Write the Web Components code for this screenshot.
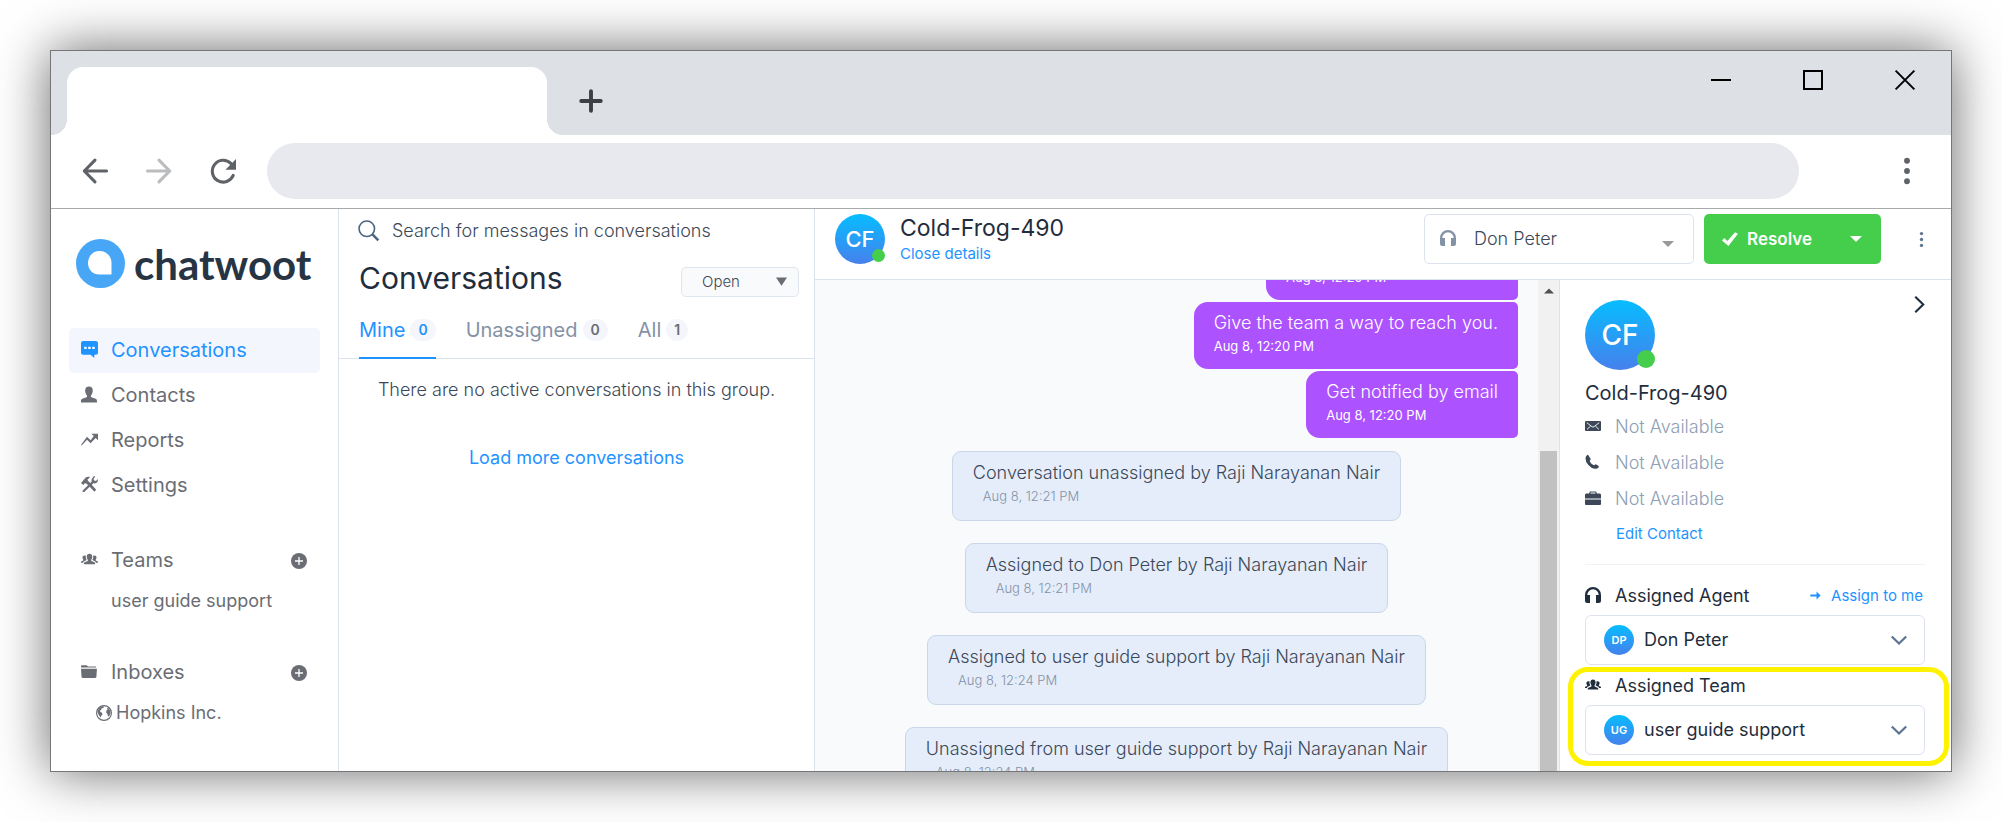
<!DOCTYPE html>
<html lang="en">
<head>
<meta charset="utf-8">
<title>Chatwoot</title>
<style>
  body { margin: 0; background: #fff; font-family: Inter, "Liberation Sans", sans-serif; color: #1f2d3d; }
</style>
</head>
<body>
<browser-window>
  <chat-dashboard></chat-dashboard>
</browser-window>

<script>
const RESET = `
  *, *::before, *::after { box-sizing: border-box; }
  button, select, input { font: inherit; color: inherit; background: none; border: 0; padding: 0; margin: 0; cursor: pointer; }
  select { appearance: none; outline: 0; min-width: 0; }
  a { color: inherit; text-decoration: none; }
  h1, h2, h3, p, ul { margin: 0; padding: 0; list-style: none; font-weight: 400; }
`;

/* Registers an element whose shadow root is cloned from a template. */
function define(tag, css, html, ready) {
  const template = document.createElement('template');
  template.innerHTML = `<style>${RESET}${css}</style>${html}`;
  customElements.define(tag, class extends HTMLElement {
    connectedCallback() {
      if (this.shadowRoot) return;
      const root = this.attachShadow({ mode: 'open' });
      root.append(template.content.cloneNode(true));
      if (ready) ready(this, root);
    }
  });
}

/* ---------- Icons ---------- */
const PEOPLE = '<path d="M8 2.500c1.700 0 2.600 1.200 2.600 2.900 0 1.100-.4 2.100-1 2.800v1.300l3 1.200c.5.2.7.7.7 1.300v.5H2.700V12c0-.6.2-1.100.7-1.300l3-1.200V8.200c-.6-.7-1-1.700-1-2.800 0-1.700.9-2.900 2.600-2.900z"/><path d="M3.400 4.200c.5 0 .9.1 1.200.3-.3 1.500 0 2.900.8 4L2.600 9.800 1.900 11H0v-.6c0-.4.3-.7.6-.8l1.500-.7v-.8c-.5-.5-.7-1.200-.7-1.900 0-1.200.7-2 2-2zM12.600 4.200c-.5 0-.9.1-1.200.3.3 1.500 0 2.900-.8 4l2.800 1.300.7 1.200H16v-.6c0-.4-.3-.7-.6-.8l-1.500-.7v-.8c.5-.5.7-1.200.7-1.900 0-1.200-.7-2-2-2z"/>';
const HEADPHONES = '<path d="M8 0a8 8 0 0 0-8 8v5.500A2.500 2.500 0 0 0 2.500 16H5V8H2.300A5.700 5.700 0 0 1 8 2.200 5.700 5.700 0 0 1 13.700 8H11v8h2.500a2.500 2.500 0 0 0 2.500-2.500V8a8 8 0 0 0-8-8z"/>';
const ICONS = {
  chat: '<path d="M2 0h12a2 2 0 0 1 2 2v9a2 2 0 0 1-2 2h-1.500v3L9 13H2a2 2 0 0 1-2-2V2a2 2 0 0 1 2-2z"/><path fill="#fff" d="M3 5.500h2.300v2H3zM6.800 5.500h2.300v2H6.800zM10.600 5.500h2.300v2h-2.300z"/>',
  person: '<path d="M7.500.5c2.300 0 3.600 1.500 3.600 3.800 0 1.700-.6 3.300-1.500 4.300-.4.5-.4 1.800.2 2.100l3.900 1.400c.8.300 1.300.9 1.300 1.800v1.600H0v-1.600c0-.9.5-1.500 1.300-1.800l3.900-1.400c.6-.3.6-1.600.2-2.100-.9-1-1.500-2.600-1.500-4.300C3.900 2 5.200.5 7.500.5z"/>',
  trend: '<path d="M9.800 2.500H16v6.200l-2.200-2.200L9 11.600 5.700 8.300.9 13.500 0 13.200l5.600-7.700 3.500 3.300 2.900-4.100z"/>',
  tools: '<path d="M1 5.300 4.700 1.200C6 .4 7.400.5 8.600 1L6 3.600l1.200 1.500 1.500 1.600 5.600 6.300-1.700 1.800-6-6.300-1.700-1.500-1.400-.2-1.300 1.600L0 6.600z"/><path d="M12.200 0 10.600 2c-.8 1-.9 2-.5 3.100L1.600 13.600c-.6.9.5 2 1.500 1.400l8.500-8.100c1.600.4 3.300-.2 4.100-1.700l.3-2.300-2 1.800-1.900-.6-.3-1.600 1.600-1.900z"/>',
  people: PEOPLE,
  folder: '<path d="M1.200 2h4.200l1.200 1.300h6.700c.7 0 1.100.4 1.100 1H0V3.100C0 2.400.5 2 1.200 2zM0 5.400h15l-.5 7.600c0 .6-.5 1-1.100 1H1.600c-.6 0-1.100-.4-1.100-1z"/>',
  globe: '<path fill-rule="evenodd" d="M8 0a8 8 0 1 1 0 16A8 8 0 0 1 8 0zm0 1.200a6.800 6.800 0 1 0 0 13.600A6.800 6.800 0 0 0 8 1.200z"/><path d="m3 3.200 3-2 2.600.4L7 3l-1.500.5-.3 1.500-1.300.6.200 1L6.200 8l.2 1.600-1.200 1.500-.6 1.500-1.500-2.100L1.800 8l.1-2.500zM11 3.400l1.100-.7 2.100 2.700.3 2.800-1.200 2.700-1.200.5-.7-2.500-1.200-1.300.2-2 1.200-.7z"/>',
  add: '<circle cx="8" cy="8" r="8"/><path stroke="#fff" stroke-width="1.300" d="M8 4v8M4 8h8"/>',
  search: '<g fill="none" stroke="currentColor"><circle cx="6.700" cy="6.700" r="5.900" stroke-width="1.200"/><path stroke-width="1.900" d="m11 11 4.500 4.500"/></g>',
  headphones: HEADPHONES,
  check: '<path d="M0 9.600 2.200 7l3.200 3L13 1.300l3 1.500L6.400 15z"/>',
  dots: '<circle cx="8" cy="1.700" r="1.800"/><circle cx="8" cy="8" r="1.800"/><circle cx="8" cy="14.300" r="1.800"/>',
  caret: '<path d="M0 4h16l-8 8z"/>',
  triangle: '<path d="M0 2h16L8 14z"/>',
  mail: '<path d="M1 3h14a1 1 0 0 1 1 1v8a1 1 0 0 1-1 1H1a1 1 0 0 1-1-1V4a1 1 0 0 1 1-1z"/><path fill="none" stroke="#fff" stroke-width=".9" d="m1.800 4.700 5.200 4q1 .7 2 0l5.200-4M2 11.400l3.600-3.300M14 11.400l-3.600-3.300"/>',
  phone: '<path d="M3.400 1.200 5.600 4.700q.4.900-.9 1.900.2 1.700 1.800 3.200 1.500 1.400 3 1.500.9-1.300 1.800-.9l2.300 1.500q.6.500.1 1.300-1.500 2-3.900 1.600-3.500-.5-6.400-3.900Q.3 7.400.5 4.200q.2-1.900 1.600-3.200.8-.4 1.300.2z"/>',
  briefcase: '<path d="M5 1.500h6l1 2h3l1 1v4H0v-4l1-1h3zm.7 1-.4 1h5.400l-.4-1zM0 9.500h16V14a1 1 0 0 1-1 1H1a1 1 0 0 1-1-1z"/>',
  arrow: '<path d="M9.500 2.300 15.500 8l-6 5.700V9.300H.5V6.700h9z"/>',
  down: '<path fill="none" stroke="currentColor" stroke-width="2.300" d="m.8 4.500 7.200 7 7.200-7"/>',
  next: '<path fill="none" stroke="currentColor" stroke-width="2" d="m4 .8 7.500 7.200L4 15.200"/>',
  back: '<path fill="none" stroke="currentColor" stroke-width="1.900" stroke-linecap="round" stroke-linejoin="round" d="M8 1.300 1.400 8 8 14.700M1.400 8h13.700"/>',
  forward: '<path fill="none" stroke="currentColor" stroke-width="1.900" stroke-linecap="round" stroke-linejoin="round" d="M8 1.300 14.600 8 8 14.700M14.600 8H.9"/>',
  reload: '<path fill="none" stroke="currentColor" stroke-width="1.900" stroke-linecap="round" d="M14.300 10.700a6.700 6.700 0 1 1-1.500-7.400"/><path d="M16 .6v6.700H9.500z"/>',
  plus: '<path fill="none" stroke="currentColor" stroke-width="2.600" stroke-linecap="round" d="M8 1.500v13M1.500 8h13"/>',
  minimize: '<path d="M0 7.200h16v1.600H0z"/>',
  maximize: '<path fill="none" stroke="currentColor" stroke-width="1.600" d="M.8.8h14.400v14.400H.8z"/>',
  close: '<path fill="none" stroke="currentColor" stroke-width="1.600" d="m.5.5 15 15m0-15-15 15"/>'
};
define('ui-icon', `
  :host { display: block; flex: none; width: var(--icon-size, 16px); height: var(--icon-size, 16px); }
  svg { display: block; width: 100%; height: 100%; fill: currentColor; overflow: visible; }
`, `<svg viewBox="0 0 16 16" aria-hidden="true"></svg>`, (host, root) => {
  root.querySelector('svg').innerHTML = ICONS[host.getAttribute('name')] || '';
});

/* ---------- Avatar ---------- */
define('user-avatar', `
  :host { display: grid; place-items: center; position: relative; flex: none; width: var(--size); height: var(--size);
    border-radius: 50%; background: linear-gradient(#06bdff, #4680ec); color: #fff; font-weight: 500; }
  i { display: none; position: absolute; right: 0; bottom: 2px; width: 26%; height: 26%; border-radius: 50%; background: #44ce4b; }
  :host([online]) i { display: block; }
`, `<span><slot></slot></span><i></i>`);

/* ---------- Browser frame ---------- */
define('browser-window', `
  :host { display: flex; height: 100vh; min-height: 500px; padding: 50px; box-sizing: border-box; overflow: hidden; }
  .frame { flex: 1; min-width: 0; display: flex; flex-direction: column; border: 1px solid #757678; background: #fff;
    box-shadow: 0 0 50px rgba(0, 0, 0, .6); }
  .tabs { flex: none; display: flex; align-items: flex-end; height: 84px; padding-left: 16px; background: #dde0e5; }
  .tab { position: relative; width: 480px; height: 68px; background: #fff; border-radius: 16px 16px 0 0; }
  .tab::before, .tab::after { content: ""; position: absolute; bottom: 0; width: 16px; height: 16px; }
  .tab::before { right: 100%; background: radial-gradient(circle at 0 0, transparent 16px, #fff 16px); }
  .tab::after { left: 100%; background: radial-gradient(circle at 100% 0, transparent 16px, #fff 16px); }
  .plus { align-self: center; margin: 16px 0 0 32px; color: #3c4043; --icon-size: 24px; }
  .controls { display: flex; gap: 72px; margin: 0 36px 0 auto; align-self: flex-start; padding-top: 19px; color: #000; --icon-size: 20px; }
  .bar { flex: none; display: flex; align-items: center; height: 74px; padding: 0 31px 2px; border-bottom: 1px solid #a9aaac;
    color: #5f6368; --icon-size: 26px; }
  .bar .next { margin: 0 38px; }
  .bar .off { color: #babcbe; }
  .address { flex: 1; min-width: 0; height: 56px; margin: 0 95px 0 31px; padding: 0 28px; border-radius: 28px; background: #e8e9ee; cursor: text; }
  .page { flex: 1; min-height: 0; display: flex; }
  ::slotted(*) { flex: 1; min-width: 0; }
`, `
  <div class="frame">
    <div class="tabs">
      <div class="tab"></div>
      <button class="plus" aria-label="New tab"><ui-icon name="plus"></ui-icon></button>
      <div class="controls">
        <button aria-label="Minimize"><ui-icon name="minimize"></ui-icon></button>
        <button aria-label="Maximize"><ui-icon name="maximize"></ui-icon></button>
        <button aria-label="Close"><ui-icon name="close"></ui-icon></button>
      </div>
    </div>
    <div class="bar">
      <button aria-label="Back"><ui-icon name="back"></ui-icon></button>
      <button class="next off" aria-label="Forward"><ui-icon name="forward"></ui-icon></button>
      <button aria-label="Reload"><ui-icon name="reload"></ui-icon></button>
      <input class="address" type="text" aria-label="Address">
      <button aria-label="Menu"><ui-icon name="dots"></ui-icon></button>
    </div>
    <div class="page"><slot></slot></div>
  </div>`);

/* ---------- Dashboard layout ---------- */
define('chat-dashboard', `
  :host { display: grid; grid-template-columns: 288px 476px minmax(0, 1fr); min-height: 0; }
  .main { display: grid; grid-template: auto minmax(0, 1fr) / minmax(0, 1fr) 392px; min-height: 0; }
  chat-header { grid-column: 1 / -1; }
  side-nav, conversation-list, .main { overflow: hidden; }
`, `
  <side-nav></side-nav>
  <conversation-list></conversation-list>
  <div class="main">
    <chat-header></chat-header>
    <message-list></message-list>
    <contact-panel></contact-panel>
  </div>`);

/* ---------- Sidebar ---------- */
define('nav-item', `
  :host { display: flex; align-items: center; height: 45px; padding: 0 13px 0 12px; border-radius: 5px; color: #6a6d74; font-size: 20px; line-height: 24px; }
  :host([active]) { background: #f4f6fd; color: #1f93ff; }
  a { flex: 1; display: flex; align-items: center; gap: 13px; padding-bottom: 2px; --icon-size: 17px; }
  button { display: none; }
  :host([addable]) button { display: block; }
`, `<a href="#"><ui-icon></ui-icon><slot></slot></a><button aria-label="Add"><ui-icon name="add"></ui-icon></button>`,
(host, root) => {
  const icon = document.createElement('ui-icon');
  icon.setAttribute('name', host.getAttribute('icon'));
  root.querySelector('a ui-icon').replaceWith(icon);
});
define('side-nav', `
  :host { display: block; padding: 30px 18px 0; border-right: 1px solid #dde3ee; background: #fff; }
  .logo { display: flex; align-items: center; gap: 9px; height: 49px; margin-bottom: 40px; padding-left: 7px;
    font: 700 42px/48px Lato, sans-serif; color: #273444; }
  .logo svg { flex: none; width: 49px; height: 49px; }
  section { margin-bottom: 30px; }
  .sub { display: flex; align-items: center; gap: 4px; height: 37px; padding: 0 0 2px 42px; font-size: 18px; color: #6a6d74; }
  .sub.icon { padding-left: 27px; }
`, `
  <a class="logo" href="#">
    <svg viewBox="0 0 49 49" aria-hidden="true"><circle cx="24.500" cy="24.500" r="24.500" fill="#47a7f6"/><path fill="#fff" d="M23.500 12c6.800 0 12 5.200 12 12v11.500h-12C16.700 35.500 12 30.700 12 24s4.700-12 11.500-12z"/></svg>
    <span>chatwoot</span>
  </a>
  <nav>
    <section>
      <nav-item icon="chat" active>Conversations</nav-item>
      <nav-item icon="person">Contacts</nav-item>
      <nav-item icon="trend">Reports</nav-item>
      <nav-item icon="tools">Settings</nav-item>
    </section>
    <section>
      <nav-item icon="people" addable>Teams</nav-item>
      <a class="sub" href="#">user guide support</a>
    </section>
    <section>
      <nav-item icon="folder" addable>Inboxes</nav-item>
      <a class="sub icon" href="#"><ui-icon name="globe"></ui-icon>Hopkins Inc.</a>
    </section>
  </nav>`);

/* ---------- Conversation list ---------- */
define('conversation-list', `
  :host { display: block; border-right: 1px solid #dde3ee; background: #fff; }
  .search { display: flex; align-items: center; gap: 13px; height: 44px; padding: 0 19px 2px; color: #4a6583; --icon-size: 21px; }
  .search input { flex: 1; min-width: 0; outline: 0; font-size: 18px; font-weight: 300; cursor: text; }
  .search input::placeholder { color: #3c4858; opacity: 1; }
  .head { display: flex; justify-content: space-between; align-items: flex-start; height: 50px; padding: 0 15px 0 20px; }
  h1 { font-size: 30px; line-height: 50px; }
  .status { display: flex; align-items: center; width: 118px; height: 30px; margin-top: 14px; padding: 0 11px 2px 20px; border: 1px solid #e0e6ed;
    border-radius: 5px; background: #f9fafc; --icon-size: 11px; color: #6a6d74; }
  .status select { flex: 1; font-size: 15px; font-weight: 300; color: #3c4858; }
  .tabs { display: flex; gap: 30px; height: 56px; padding-left: 20px; border-bottom: 1px solid #dde3ee; }
  .tabs a { display: flex; align-items: center; gap: 5px; height: 56px; padding-bottom: 2px; font-size: 20px; color: #8492a6; }
  .tabs a.active { color: #1f93ff; box-shadow: inset 0 -2px #1f93ff; }
  .tabs b { padding: 0 8px; border-radius: 11px; background: #f4f6fb; font-size: 14px; line-height: 22px; font-weight: 600; text-align: center; color: #6a6d74; }
  .tabs .active b { color: #1f93ff; }
  p { padding-top: 17px; font-size: 18px; font-weight: 300; line-height: 28px; text-align: center; color: #3c4858; }
  .more { display: block; margin: 34px auto 0; font-size: 18px; line-height: 40px; color: #1f93ff; }
`, `
  <label class="search"><ui-icon name="search"></ui-icon><input type="text" aria-label="Search" placeholder="Search for messages in conversations"></label>
  <div class="head">
    <h1>Conversations</h1>
    <label class="status"><select aria-label="Status"><option>Open</option></select><ui-icon name="triangle"></ui-icon></label>
  </div>
  <div class="tabs">
    <a class="active" href="#">Mine <b>0</b></a>
    <a href="#">Unassigned <b>0</b></a>
    <a href="#">All <b>1</b></a>
  </div>
  <p>There are no active conversations in this group.</p>
  <button class="more">Load more conversations</button>`);

/* ---------- Chat header ---------- */
define('chat-header', `
  :host { display: flex; align-items: flex-start; height: 71px; padding: 5px 10px 0 20px; border-bottom: 1px solid #dde3ee; background: #fff; }
  user-avatar { --size: 50px; font-size: 22px; }
  .who { flex: 1; margin-left: 15px; }
  h2 { font-size: 23px; line-height: 28px; }
  .who a { display: block; font-size: 15px; line-height: 24px; color: #1f93ff; }
  .agent { display: flex; align-items: center; width: 270px; height: 50px; padding: 0 19px 2px 15px; border: 1px solid #dde3ee; border-radius: 5px; color: #8492a6; --icon-size: 16px; }
  .agent select { flex: 1; margin-left: 18px; font-size: 18px; font-weight: 300; color: #3c4858; }
  .agent .caret { --icon-size: 12px; margin-top: 12px; color: #999; }
  .resolve { display: flex; width: 177px; height: 50px; margin-left: 10px; border-radius: 5px; background: #44ce4b; color: #fff; }
  .resolve button { display: flex; align-items: center; justify-content: center; }
  .do { flex: 1; gap: 9px; font-size: 17px; font-weight: 600; }
  .more { width: 51px; --icon-size: 12px; }
  .dots { display: grid; place-items: center; width: 40px; height: 50px; margin-left: 20px; color: #5d7592; --icon-size: 15px; }
`, `
  <user-avatar online>CF</user-avatar>
  <div class="who"><h2>Cold-Frog-490</h2><a href="#">Close details</a></div>
  <label class="agent"><ui-icon name="headphones"></ui-icon><select aria-label="Agent"><option>Don Peter</option></select><ui-icon class="caret" name="caret"></ui-icon></label>
  <div class="resolve">
    <button class="do"><ui-icon name="check"></ui-icon>Resolve</button>
    <button class="more" aria-label="More resolve options"><ui-icon name="caret"></ui-icon></button>
  </div>
  <button class="dots" aria-label="More actions"><ui-icon name="dots"></ui-icon></button>`);

/* ---------- Messages ---------- */
define('chat-message', `
  :host { display: block; flex: none; align-self: flex-end; margin-bottom: 2px; padding: 6px 20px 0; height: 67px; box-sizing: border-box;
    border-radius: 14px 5px 5px 14px; background: #ac52ff; color: #fff; font-size: 18px; line-height: 30px; }
  .text { min-height: 30px; font-weight: 350; }
  time { display: block; font-size: 13px; line-height: 16px; }
  :host([activity]) { align-self: center; height: 70px; margin: 11px 0; border: 1px solid #c9d7e8; border-radius: 9px; background: #e5edfb; color: #3c4858; }
  :host([activity]) .text { font-weight: 300; }
  :host([activity]) time { margin-left: 10px; font-weight: 300; color: #8492a6; }
`, `<div class="text"><slot></slot></div><time></time>`, (host, root) => {
  root.querySelector('time').textContent = host.getAttribute('time');
});
define('message-list', `
  :host { display: flex; min-height: 0; background: #f9fafc; }
  .scroll { flex: 1; min-width: 0; display: flex; flex-direction: column; overflow: auto; scrollbar-width: none; padding: 0 20px; }
  .earlier { width: 252px; }
  .track { flex: none; width: 21px; display: flex; flex-direction: column; align-items: center; background: #f1f1f1; color: #505050; --icon-size: 10px; }
  .track ui-icon { margin-top: 6px; transform: rotate(180deg); }
  .thumb { flex: 1; width: 17px; margin-top: 155px; background: #c1c1c1; }
`, `
  <div class="scroll">
    <chat-message class="earlier" time="Aug 8, 12:20 PM"></chat-message>
    <chat-message time="Aug 8, 12:20 PM">Give the team a way to reach you.</chat-message>
    <chat-message time="Aug 8, 12:20 PM">Get notified by email</chat-message>
    <chat-message activity time="Aug 8, 12:21 PM">Conversation unassigned by Raji Narayanan Nair</chat-message>
    <chat-message activity time="Aug 8, 12:21 PM">Assigned to Don Peter by Raji Narayanan Nair</chat-message>
    <chat-message activity time="Aug 8, 12:24 PM">Assigned to user guide support by Raji Narayanan Nair</chat-message>
    <chat-message activity time="Aug 8, 12:24 PM">Unassigned from user guide support by Raji Narayanan Nair</chat-message>
  </div>
  <div class="track"><ui-icon name="caret"></ui-icon><div class="thumb"></div></div>`, (host, root) => {
  root.querySelector('.scroll').scrollTop = 47;
});

/* ---------- Contact panel ---------- */
define('contact-panel', `
  :host { display: block; padding: 20px 26px 0 25px; border-left: 1px solid #dde3ee; background: #fff; overflow: hidden; }
  .top { display: flex; justify-content: space-between; align-items: flex-start; }
  .top user-avatar { --size: 70px; font-size: 28px; }
  .top button { --icon-size: 17px; margin: -4px -3px 0 0; }
  h3 { margin: 11px 0 3px; font-size: 20px; line-height: 24px; }
  li { display: flex; align-items: center; gap: 14px; height: 36px; font-size: 18px; font-weight: 300; color: #8da0b6; }
  li ui-icon { color: #3c4858; }
  .edit { display: block; padding-left: 31px; font-size: 15px; line-height: 36px; color: #1f93ff; }
  hr { margin: 12px 0 10px; border: 0; border-top: 1px solid #f0f2f5; }
  .group { position: relative; }
  .label { display: flex; align-items: center; gap: 14px; height: 40px; font-size: 18px; }
  .label button { display: flex; align-items: center; gap: 10px; margin: 0 2px 0 auto; font-size: 15px; color: #1f93ff; --icon-size: 11px; }
  .pick { display: flex; align-items: center; width: 100%; height: 50px; padding: 0 17px 0 18px; border: 1px solid #dde3ee; border-radius: 6px; font-size: 18px; }
  .pick user-avatar { --size: 30px; margin-right: 10px; font-size: 11px; font-weight: 600; }
  .pick span { padding-bottom: 2px; }
  .pick ui-icon { margin-left: auto; color: #5d7592; }
  .marked::after { content: ""; position: absolute; inset: 2px -24px -11px -17px; border: 5px solid #fff200; border-radius: 20px; pointer-events: none; }
`, `
  <div class="top">
    <user-avatar online>CF</user-avatar>
    <button aria-label="Close panel"><ui-icon name="next"></ui-icon></button>
  </div>
  <h3>Cold-Frog-490</h3>
  <ul>
    <li><ui-icon name="mail"></ui-icon>Not Available</li>
    <li><ui-icon name="phone"></ui-icon>Not Available</li>
    <li><ui-icon name="briefcase"></ui-icon>Not Available</li>
  </ul>
  <a class="edit" href="#">Edit Contact</a>
  <hr>
  <div class="group">
    <div class="label"><ui-icon name="headphones"></ui-icon><span id="agent">Assigned Agent</span><button><ui-icon name="arrow"></ui-icon>Assign to me</button></div>
    <button class="pick" aria-describedby="agent"><user-avatar>DP</user-avatar><span>Don Peter</span><ui-icon name="down"></ui-icon></button>
  </div>
  <div class="group marked">
    <div class="label"><ui-icon name="people"></ui-icon><span id="team">Assigned Team</span></div>
    <button class="pick" aria-describedby="team"><user-avatar>UG</user-avatar><span>user guide support</span><ui-icon name="down"></ui-icon></button>
  </div>`);
</script>
</body>
</html>
